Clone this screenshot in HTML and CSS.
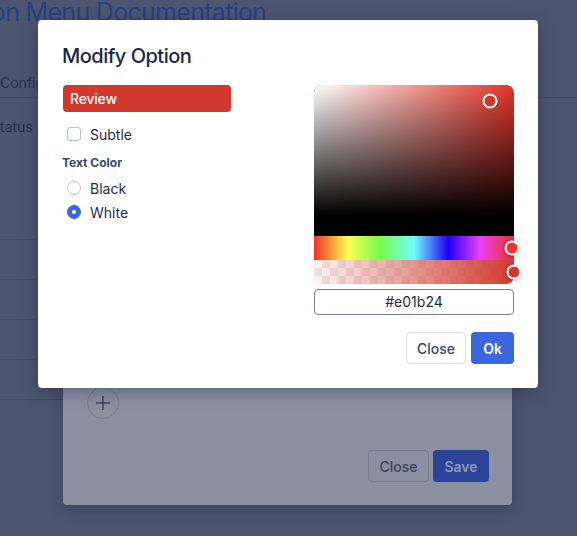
FILE: index.html
```html
<!DOCTYPE html>
<html lang="en">
<head>
<meta charset="utf-8">
<title>Modify Option</title>
<link rel="stylesheet" href="styles.css">
</head>
<body>
<div class="page">
  <h1 class="page-title">Option Menu Documentation</h1>
  <div class="tabs"><span class="tab">Configuration</span></div>
  <p class="status">Status shows the selected option</p>
  <div class="table">
    <div class="table-row"></div>
    <div class="table-row"></div>
    <div class="table-row"></div>
    <div class="table-row"></div>
    <div class="table-row"></div>
  </div>
</div>

<div class="dialog dialog-under">
  <button class="add-btn" aria-label="Add option">
    <svg width="16" height="16" viewBox="0 0 16 16"><path d="M8 1v14M1 8h14" stroke="#3d4661" stroke-width="1.6" fill="none"/></svg>
  </button>
  <div class="under-footer">
    <button class="btn btn-under-close">Close</button>
    <button class="btn btn-under-save">Save</button>
  </div>
</div>

<div class="dialog dialog-top">
  <h2 class="dialog-title">Modify Option</h2>
  <div class="dialog-body">
    <div class="options">
      <div class="tag">Review</div>
      <label class="check-row"><span class="box"></span><span>Subtle</span></label>
      <div class="field-label">Text Color</div>
      <div class="radios">
        <label class="radio-row"><span class="radio"></span><span>Black</span></label>
        <label class="radio-row"><span class="radio checked"></span><span>White</span></label>
      </div>
    </div>
    <div class="picker">
      <div class="saturation"><span class="pointer sat-pointer"></span></div>
      <div class="hue"><span class="pointer hue-pointer"></span></div>
      <div class="alpha"><span class="pointer alpha-pointer"></span></div>
      <div class="hex-input">#e01b24</div>
    </div>
  </div>
  <div class="dialog-footer">
    <button class="btn btn-close">Close</button>
    <button class="btn btn-ok">Ok</button>
  </div>
</div>
</body>
</html>
```

FILE: styles.css
```css
* { box-sizing: border-box; }
html, body { margin: 0; }
body {
  width: 577px;
  height: 536px;
  overflow: hidden;
  position: relative;
  background: #4d5670;
  font-family: Inter, "Noto Sans", sans-serif;
  color: #1f2b4d;
}

/* dimmed page behind */
.page { color: #27304b; }
.page-title {
  margin: -4px 0 0 -55px;
  font-size: 25px;
  line-height: 32px;
  font-weight: 400;
  letter-spacing: -0.7px;
  color: #283e86;
  white-space: nowrap;
}
.tabs {
  padding: 45px 0 4px;
  border-bottom: 1px solid #434a63;
  font-size: 14px;
  line-height: 20px;
}
.status {
  margin: 19px 0 0 -9px;
  font-size: 14px;
  line-height: 20px;
  white-space: nowrap;
}
.table { margin-top: 63px; width: 420px; }
.table-row { height: 40px; border-bottom: 1px solid #434a63; }

/* dialogs */
.dialog { position: absolute; border-radius: 4px; }

.dialog-under {
  left: 63px;
  top: 340px;
  width: 449px;
  height: 165px;
  background: #8a8fa1;
  padding: 47px 23px 23px 24px;
  box-shadow: 0 4px 14px rgba(20, 25, 45, 0.3);
}
.add-btn {
  display: flex;
  align-items: center;
  justify-content: center;
  width: 32px;
  height: 32px;
  padding: 0;
  border: 1px solid #767c91;
  border-radius: 50%;
  background: transparent;
}
.under-footer {
  display: flex;
  justify-content: flex-end;
  gap: 4px;
  margin-top: 31px;
}

.dialog-top {
  left: 38px;
  top: 20px;
  width: 500px;
  height: 368px;
  background: #fff;
  padding: 22px 24px 24px;
  box-shadow: 0 4px 16px rgba(15, 20, 40, 0.35);
}
.dialog-title {
  margin: 0;
  font-size: 20px;
  line-height: 28px;
  font-weight: 500;
  letter-spacing: -0.5px;
  color: #1b2748;
}
.dialog-body {
  display: flex;
  justify-content: space-between;
  margin-top: 15px;
}
.options { width: 169px; }
.tag {
  height: 27px;
  margin-left: 1px;
  padding-left: 7px;
  background: #d1392e;
  color: #fff;
  border-radius: 4px;
  font-size: 14px;
  line-height: 27px;
  font-weight: 500;
  letter-spacing: -0.2px;
}
.check-row, .radio-row {
  display: flex;
  align-items: center;
  gap: 9px;
  padding-left: 5px;
  font-size: 14px;
  color: #1f2b4d;
}
.check-row { height: 20px; margin-top: 12px; }
.box {
  width: 14px;
  height: 14px;
  border: 1.5px solid #b9bfcc;
  border-radius: 3px;
}
.field-label {
  margin-top: 11px;
  font-size: 12px;
  line-height: 16px;
  font-weight: 700;
  color: #3d4866;
}
.radios { margin-top: 5px; }
.radio-row { height: 24px; }
.radio {
  width: 14px;
  height: 14px;
  border: 1px solid #c3c8d3;
  border-radius: 50%;
}
.radio.checked {
  display: flex;
  align-items: center;
  justify-content: center;
  background: #3c66dc;
  border-color: #3c66dc;
}
.radio.checked::after {
  content: "";
  width: 4px;
  height: 4px;
  border-radius: 50%;
  background: #fff;
}

/* colour picker */
.picker { width: 200px; }
.saturation, .hue, .alpha { position: relative; }
.saturation {
  height: 151px;
  border-radius: 8px 8px 0 0;
  border-bottom: 21px solid #000;
  background:
    linear-gradient(to top, #000, rgba(0, 0, 0, 0)),
    linear-gradient(to right, #fff, rgba(255, 255, 255, 0)),
    #e2342a;
}
.hue {
  height: 24px;
  background: linear-gradient(to right, #ea3323 0%, #fffd54 17%, #75fb4c 33%, #75fbfd 50%, #1f00f5 67%, #ea3ff7 83%, #ea3323 100%);
}
.alpha {
  height: 24px;
  border-radius: 0 0 8px 8px;
  background:
    linear-gradient(to right, rgba(209, 57, 46, 0.05), rgb(209, 57, 46)),
    repeating-conic-gradient(#ececec 0 25%, #fff 0 50%) 0 0 / 16px 16px;
}
.pointer {
  position: absolute;
  width: 15px;
  height: 15px;
  border: 2px solid #fff;
  border-radius: 50%;
  transform: translate(-50%, -50%);
}
.sat-pointer { left: 176px; top: 16px; background: #d1392e; }
.hue-pointer { left: 198px; top: 12px; background: #e8392a; box-shadow: 0 1px 4px rgba(0, 0, 0, 0.3); }
.alpha-pointer { left: 200px; top: 12px; background: #d1392e; box-shadow: 0 1px 4px rgba(0, 0, 0, 0.3); }
.hex-input {
  margin-top: 5px;
  height: 26px;
  border: 1px solid #7a8095;
  border-radius: 4px;
  text-align: center;
  font-size: 14px;
  line-height: 24px;
  color: #1f2a44;
}

/* buttons */
.dialog-footer {
  display: flex;
  justify-content: flex-end;
  gap: 5px;
  margin-top: 17px;
}
.btn {
  height: 32px;
  padding: 0;
  border-radius: 4px;
  font-family: inherit;
  font-size: 14px;
  border: 1px solid transparent;
}
.btn-close {
  width: 60px;
  background: #fff;
  border-color: #dadde3;
  color: #394462;
  font-weight: 500;
}
.btn-ok {
  width: 43px;
  background: #3c66dc;
  color: #fff;
  font-weight: 600;
}
.btn-under-close {
  width: 61px;
  background: transparent;
  border-color: #757b90;
  color: #3b4562;
  font-weight: 500;
}
.btn-under-save {
  width: 56px;
  background: #2a4396;
  color: #8d97bb;
  font-weight: 600;
}
```
